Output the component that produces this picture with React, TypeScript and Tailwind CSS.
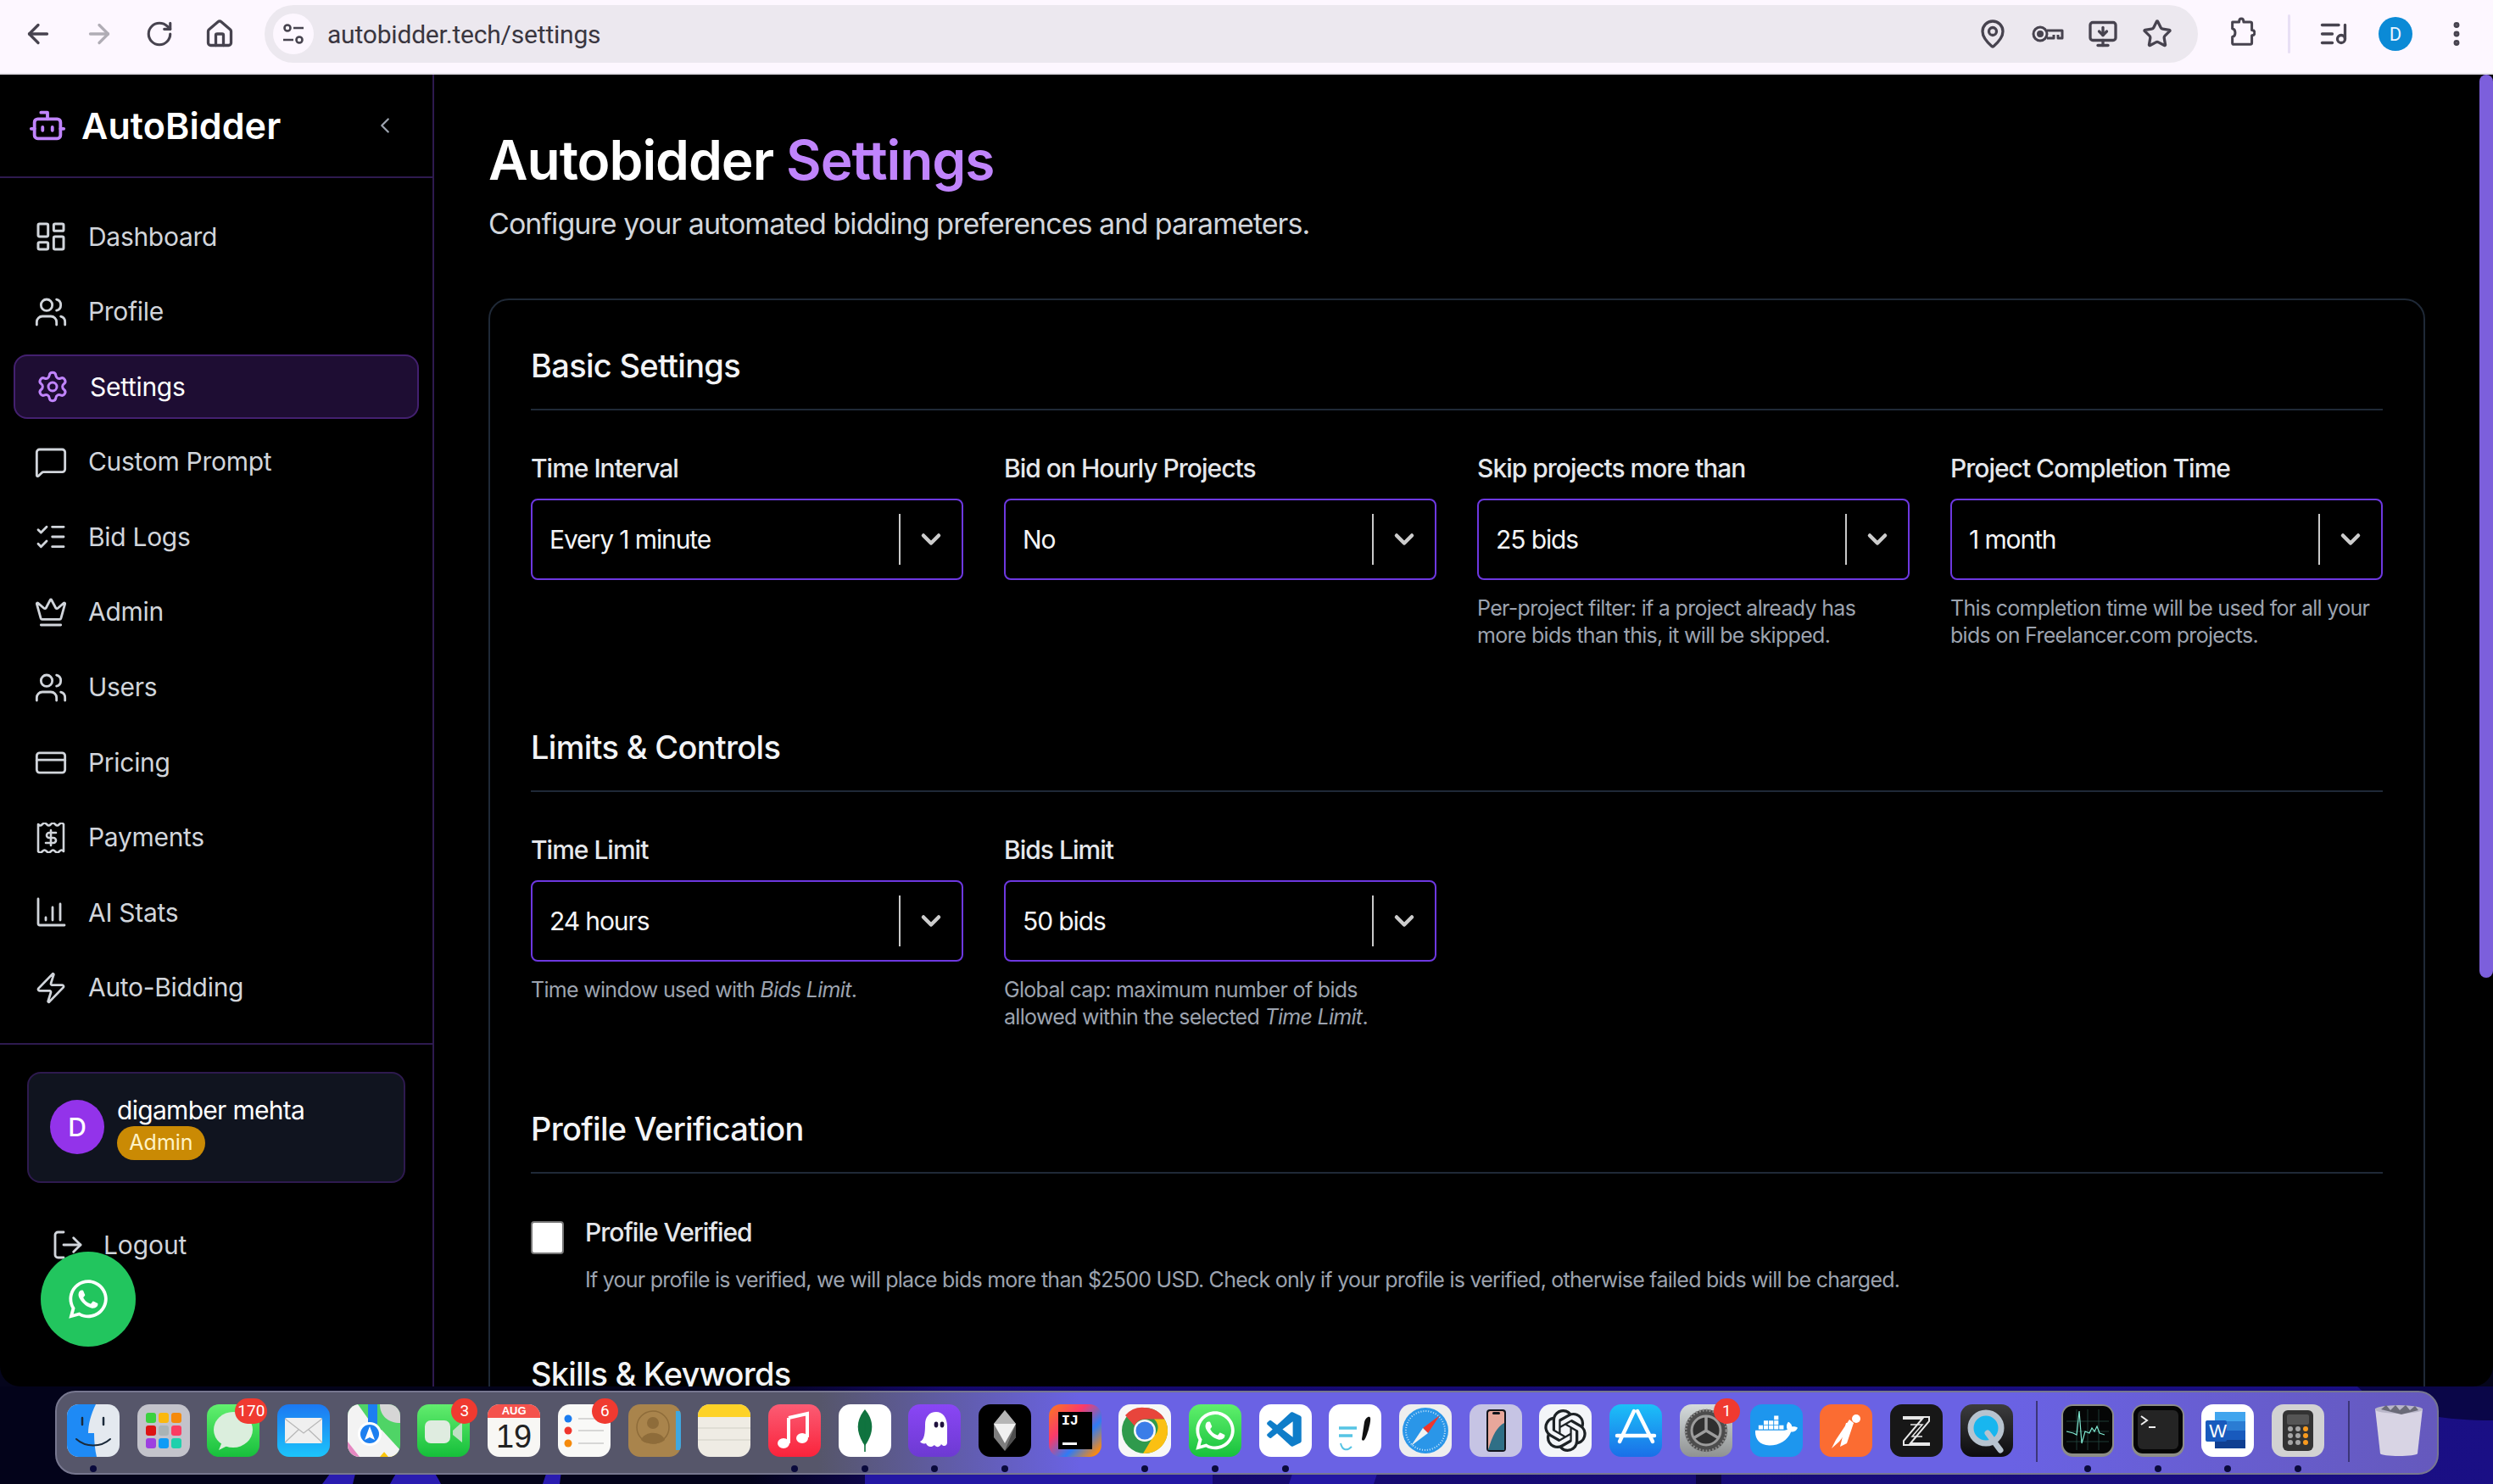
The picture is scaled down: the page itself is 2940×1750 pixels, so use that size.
import React from 'react';
import {
  ArrowLeft, ArrowRight, RotateCw, Home, MapPin, MonitorDown, Star, ListMusic,
  EllipsisVertical, Bot, ChevronLeft, ChevronDown, LayoutDashboard, Users, Settings, MessageSquare, ListChecks,
  Crown, CreditCard, Zap, LogOut,
} from 'lucide-react';
import { FaWhatsapp, FaDocker } from 'react-icons/fa';
import { VscVscode } from 'react-icons/vsc';
import { SiOpenai } from 'react-icons/si';

const PaymentsIcon = () => (
  <svg viewBox="0 0 34 36" className="w-[34px] h-[36px]" fill="none" stroke="currentColor" strokeWidth="2.6" strokeLinejoin="round">
    <path d="M2 2c2 2 3 2 5 0s3-2 5 0 3 2 5 0 3-2 5 0 3 2 5 0 3-2 5 0v32c-2-2-3-2-5 0s-3 2-5 0-3-2-5 0-3 2-5 0-3-2-5 0-3 2-5 0z" />
    <path d="M23 12h-8a3 3 0 0 0 0 6h5a3 3 0 0 1 0 6h-9M17 9v18" strokeLinecap="round" />
  </svg>
);

const StatsIcon = () => (
  <svg viewBox="0 0 36 36" className="w-[36px] h-[36px]" fill="none" stroke="currentColor" strokeWidth="2.8" strokeLinecap="round">
    <path d="M3 2v29a2 2 0 0 0 2 2h29M12 24v3M20 12v15M29 8v19" />
  </svg>
);

const SiteInfoIcon = () => (
  <svg viewBox="0 0 28 28" className="w-[28px] h-[28px]" fill="none" stroke="currentColor" strokeWidth="2.6">
    <circle cx="7" cy="7" r="3.5" />
    <circle cx="21" cy="21" r="3.5" />
    <path d="M14 7h12M2 21h12" />
  </svg>
);

const KeyIcon = () => (
  <svg viewBox="0 0 38 30" className="w-[38px] h-[30px]" fill="none" stroke="currentColor" strokeWidth="3">
    <circle cx="10" cy="15" r="8" />
    <circle cx="10" cy="15" r="2.5" fill="currentColor" />
    <path d="M18 11h18v9h-5v-4M26 16v4h-8" strokeLinejoin="round" />
  </svg>
);

const PuzzleIcon = () => (
  <svg viewBox="0 0 34 46" className="w-[30px] h-[42px]" fill="none" stroke="currentColor" strokeWidth="3.4" strokeLinejoin="round">
    <path d="M3 7h9c0-6 6-6 6 0h9a2 2 0 0 1 2 2v9c5 0 5 7 0 7v10a2 2 0 0 1-2 2H4a2 2 0 0 1-1-2v-8c5-1 5-10 0-11z" />
  </svg>
);

const nav = [
  { label: 'Dashboard', icon: <LayoutDashboard size={40} strokeWidth={1.8} /> },
  { label: 'Profile', icon: <Users size={40} strokeWidth={1.7} /> },
  { label: 'Settings', icon: <Settings size={40} strokeWidth={1.8} />, active: true },
  { label: 'Custom Prompt', icon: <MessageSquare size={42} strokeWidth={1.7} /> },
  { label: 'Bid Logs', icon: <ListChecks size={40} strokeWidth={1.7} /> },
  { label: 'Admin', icon: <Crown size={42} strokeWidth={1.7} /> },
  { label: 'Users', icon: <Users size={40} strokeWidth={1.7} /> },
  { label: 'Pricing', icon: <CreditCard size={43} strokeWidth={1.7} /> },
  { label: 'Payments', icon: <PaymentsIcon /> },
  { label: 'AI Stats', icon: <StatsIcon /> },
  { label: 'Auto-Bidding', icon: <Zap size={40} strokeWidth={1.7} /> },
];

const ChromeBar = () => (
  <div className="h-[88px] shrink-0 bg-[#fdf7ff] border-b-2 border-[#e6e2ea] pb-[6px] flex items-center text-[#47434f] relative z-10">
    <div className="w-[312px] flex items-center pl-[27px] gap-[36px]">
      <ArrowLeft size={36} strokeWidth={2.2} />
      <ArrowRight size={36} strokeWidth={2.2} className="text-[#b0adb5]" />
      <RotateCw size={34} strokeWidth={2.2} />
      <Home size={36} strokeWidth={2.2} />
    </div>
    <div className="w-[2280px] h-[68px] rounded-full bg-[#ece8ef] flex items-center pl-[10px] pr-[30px]">
      <div className="w-[48px] h-[48px] rounded-full bg-[#fdf7ff] flex items-center justify-center">
        <SiteInfoIcon />
      </div>
      <span className="ml-[16px] text-[30px] tracking-[-0.2px] text-[#3a3640] font-['Roboto',sans-serif]">autobidder.tech/settings</span>
      <div className="ml-auto flex items-center gap-[28px]">
        <MapPin size={36} strokeWidth={2.2} />
        <KeyIcon />
        <MonitorDown size={36} strokeWidth={2.2} />
        <Star size={36} strokeWidth={2.2} />
      </div>
    </div>
    <span className="ml-[38px] flex"><PuzzleIcon /></span>
    <div className="ml-[38px] w-[3px] h-[46px] rounded-full bg-[#e8dff5]" />
    <ListMusic size={36} strokeWidth={2.2} className="ml-[33px]" />
    <div className="ml-[35px] w-[40px] h-[40px] rounded-full bg-[#0b8ad6] text-[#e8f4ff] text-[22px] flex items-center justify-center font-['Roboto',sans-serif]">D</div>
    <EllipsisVertical size={36} strokeWidth={2.6} className="ml-[34px]" />
  </div>
);

const Sidebar = () => (
  <aside className="w-[512px] shrink-0 border-r-2 border-[#2e1a4f] flex flex-col relative">
    <div className="h-[122px] shrink-0 border-b-2 border-[#2e1a4f] flex items-center pl-[33px] pr-[41px]">
      <Bot size={46} strokeWidth={2} className="text-[#c084fc]" />
      <span className="ml-[17px] text-[43px] font-semibold text-white tracking-[0.1px]">AutoBidder</span>
      <ChevronLeft size={30} strokeWidth={1.8} className="ml-auto text-[#9ca3af]" />
    </div>
    <nav className="flex flex-col px-[16px] pt-[31px]">
      {nav.map((item) => (
        <div
          key={item.label}
          className={
            item.active
              ? 'h-[76px] mb-[12.6px] flex items-center rounded-[16px] border-2 border-[#43206f] bg-[#1e0d33] text-white'
              : 'h-[76px] mb-[12.6px] flex items-center rounded-[16px] border-2 border-transparent text-[#d1d5db]'
          }
        >
          <span className={item.active ? 'w-[40px] ml-[24px] flex justify-center text-[#c084fc]' : 'w-[40px] ml-[22px] flex justify-center'}>{item.icon}</span>
          <span className="ml-[24px] text-[30px] tracking-[-0.3px]">{item.label}</span>
        </div>
      ))}
    </nav>
    <div className="mt-[14px] border-t-2 border-[#2e1a4f] px-[32px] pt-[32px]">
      <div className="h-[131px] rounded-[16px] border-2 border-[#2e1a4f] bg-[#10141f] flex items-center pl-[25px]">
        <div className="w-[64px] h-[64px] rounded-full bg-[#9333ea] text-white text-[30px] font-medium flex items-center justify-center">D</div>
        <div className="ml-[15px] flex flex-col">
          <span className="text-[30px] leading-[36px] text-white tracking-[-0.7px]">digamber mehta</span>
          <span className="mt-[1px] w-[104px] h-[40px] rounded-full bg-[#ca8a04] text-[#fef3c7] text-[25px] flex items-center justify-center">Admin</span>
        </div>
      </div>
    </div>
    <div className="pl-[60px] pt-[51px] flex items-center text-[#d1d5db]">
      <LogOut size={40} strokeWidth={1.7} />
      <span className="ml-[22px] text-[30px] tracking-[-0.1px]">Logout</span>
    </div>
    <div className="absolute left-[48px] top-[1388px] w-[112px] h-[112px] rounded-full bg-[#22c55e] flex items-center justify-center text-white">
      <FaWhatsapp size={52} />
    </div>
  </aside>
);

const SectionTitle = ({ children }: { children: React.ReactNode }) => (
  <div className="h-[80px] border-b-2 border-[#1f2937] text-[38px] leading-[54px] font-medium text-[#f3f4f6] tracking-[-0.7px]">{children}</div>
);

const Field = ({ label, value, help }: { label: string; value: string; help?: React.ReactNode }) => (
  <div className="flex flex-col">
    <label className="h-[40px] leading-[38px] text-[30px] font-medium text-[#e5e7eb] tracking-[-1px]">{label}</label>
    <div className="mt-[15px] h-[96px] rounded-[8px] border-2 border-[#6d38e0] flex items-center pl-[20px]">
      <span className="flex-1 text-[30px] text-[#f3f4f6] tracking-[-1.1px]">{value}</span>
      <div className="w-[2px] h-[60px] bg-[#c9c9c9]" />
      <ChevronDown size={36} strokeWidth={3} className="mx-[18px] text-[#cccccc]" />
    </div>
    {help && <p className="mt-[17px] text-[25px] leading-[32px] text-[#9ca3af] tracking-[-0.7px]">{help}</p>}
  </div>
);

const MainPanel = () => (
  <main className="flex-1 pl-[64px] pr-[80px] pt-[65px] overflow-hidden">
    <h1 className="text-[64px] leading-[72px] font-semibold text-white tracking-[-1.05px]">
      Autobidder <span className="text-[#c084fc]">Settings</span>
    </h1>
    <p className="mt-[11px] text-[34px] leading-[56px] text-[#d1d5db] tracking-[-0.95px]">Configure your automated bidding preferences and parameters.</p>
    <div className="mt-[60px] rounded-t-[24px] border-2 border-[#1f2937] px-[48px] pt-[50px]">
      <SectionTitle>Basic Settings</SectionTitle>
      <div className="mt-[49px] grid grid-cols-4 gap-x-[48px] items-start h-[233px]">
        <Field label="Time Interval" value="Every 1 minute" />
        <Field label="Bid on Hourly Projects" value="No" />
        <Field label="Skip projects more than" value="25 bids" help={<>Per-project filter: if a project already has<br />more bids than this, it will be skipped.</>} />
        <Field label="Project Completion Time" value="1 month" help={<>This completion time will be used for all your<br />bids on Freelancer.com projects.</>} />
      </div>
      <div className="mt-[88px]">
        <SectionTitle>Limits &amp; Controls</SectionTitle>
      </div>
      <div className="mt-[49px] grid grid-cols-4 gap-x-[48px] items-start h-[233px]">
        <Field label="Time Limit" value="24 hours" help={<>Time window used with <em>Bids Limit</em>.</>} />
        <Field label="Bids Limit" value="50 bids" help={<>Global cap: maximum number of bids<br />allowed within the selected <em>Time Limit</em>.</>} />
      </div>
      <div className="mt-[88px]">
        <SectionTitle>Profile Verification</SectionTitle>
      </div>
      <div className="mt-[49px] flex">
        <div className="mt-[7px] w-[39px] h-[39px] rounded-[4px] border-2 border-[#767676] bg-white" />
        <div className="ml-[25px]">
          <div className="h-[40px] leading-[40px] text-[30px] font-medium text-[#e5e7eb] tracking-[-1px]">Profile Verified</div>
          <p className="mt-[16px] h-[40px] leading-[40px] text-[25px] text-[#9ca3af] tracking-[-0.75px]">If your profile is verified, we will place bids more than $2500 USD. Check only if your profile is verified, otherwise failed bids will be charged.</p>
        </div>
      </div>
      <div className="mt-[63px] text-[38px] leading-[56px] font-medium text-[#f3f4f6] tracking-[-0.8px]">Skills &amp; Keywords</div>
    </div>
  </main>
);

type DockProps = { name: string; dot?: boolean; badge?: string; children: React.ReactNode; className?: string };

const DockIcon = ({ name, dot, badge, children, className }: DockProps) => (
  <div title={name} className="relative w-[62px] h-[62px] shrink-0">
    <div className={`w-full h-full rounded-[14px] overflow-hidden flex items-center justify-center relative ${className ?? ''}`}>{children}</div>
    {badge && (
      <span className="absolute -top-[7px] -right-[9px] min-w-[31px] h-[30px] px-[3px] rounded-full bg-[#f03a30] text-white text-[19px] flex items-center justify-center font-['Roboto',sans-serif]">{badge}</span>
    )}
    {dot && <span className="absolute left-[27px] top-[72px] w-[8px] h-[8px] rounded-full bg-[#0a0a3c]" />}
  </div>
);

const Sep = () => <div className="w-[2px] h-[72px] mx-[7px] mt-[-4px] bg-[#3c3678] shrink-0" />;

const Art = ({ children }: { children: React.ReactNode }) => (
  <svg viewBox="0 0 62 62" className="absolute inset-0 w-full h-full">{children}</svg>
);

const Dock = () => (
  <div className="flex-1 relative pl-[65px] pt-[5px]">
    <div className="w-[2811px] h-[99px] rounded-[24px] border-2 border-[#77778f] bg-[linear-gradient(90deg,#56566a_0%,#56566a_32%,#6a62e4_43%,#6a62e4_82%,#6559bd_100%)] flex items-start pt-[14px] pl-[12px] gap-[20.7px]">
      <DockIcon name="Finder" dot className="bg-[#e4e9ef]">
        <Art>
          <path d="M0 0h34c-6 12-9 24-9 34h7c0 10 1 20 3 28H0z" fill="#1e8af5" />
          <path d="M18 16v8M43 16v8" stroke="#1b2a3a" strokeWidth="2.5" strokeLinecap="round" />
          <path d="M11 41c11 10 29 10 40 0" stroke="#1b2a3a" strokeWidth="2" fill="none" strokeLinecap="round" />
        </Art>
      </DockIcon>
      <DockIcon name="Launchpad" className="bg-[#c3c3cb]">
        <div className="grid grid-cols-3 gap-[3px]">
          {['bg-[#3bd13f]', 'bg-[#fbb80e]', 'bg-[#f58a0c]', 'bg-[#dd1313]', 'bg-[#a9b3b5]', 'bg-[#fa3d62]', 'bg-[#9d3fe0]', 'bg-[#0f9bf5]', 'bg-[#1ed0ac]'].map((c) => (
            <div key={c} className={`w-[12px] h-[12px] rounded-[3px] ${c}`} />
          ))}
        </div>
      </DockIcon>
      <DockIcon name="Messages" badge="170" className="bg-[linear-gradient(180deg,#62f06f,#17c03c)]">
        <Art>
          <ellipse cx="31" cy="30" rx="23" ry="21" fill="#dbeedd" />
          <path d="M18 44l-4 10 12-6z" fill="#dbeedd" />
        </Art>
      </DockIcon>
      <DockIcon name="Mail" className="bg-[linear-gradient(180deg,#1c78f2,#1cc4fb)]">
        <Art>
          <rect x="9" y="16" width="44" height="30" rx="2" fill="#efefef" />
          <path d="M9 17l22 17 22-17M9 45l16-15M53 45L37 30" stroke="#b8b8b8" strokeWidth="1.3" fill="none" />
        </Art>
      </DockIcon>
      <DockIcon name="Maps" className="bg-[#4fd466]">
        <Art>
          <path d="M0 0h12l44 62H0z" fill="#f3f3f3" />
          <path d="M0 44l14 18H0z" fill="#e587c1" />
          <path d="M38 62l12-14 12 14z" fill="#fcc60c" />
          <path d="M38 0c0 14 10 22 24 22V0z" fill="#d6d6d6" />
          <path d="M40 30l22 24v8H48L26 36z" fill="#f3f3f3" />
          <rect x="24" y="0" width="11" height="30" fill="#1c7ff0" />
          <circle cx="26" cy="35" r="14" fill="#fff" />
          <circle cx="26" cy="35" r="11" fill="#1c7ff0" />
          <path d="M26 26l6 16-6-3-6 3z" fill="#fff" />
        </Art>
      </DockIcon>
      <DockIcon name="FaceTime" badge="3" className="bg-[linear-gradient(180deg,#62ec6e,#15bf3a)]">
        <Art>
          <rect x="9" y="19" width="30" height="27" rx="7" fill="#dfece0" />
          <path d="M42 31l11-10v24L42 36z" fill="#bfe0c4" />
        </Art>
      </DockIcon>
      <DockIcon name="Calendar" className="bg-[#f8f7f4] flex-col justify-start">
        <div className="w-full h-[16px] shrink-0 bg-[#f4524c] text-white text-[13px] leading-[16px] font-semibold text-center font-['Liberation_Sans',sans-serif]">AUG</div>
        <div className="text-[38px] leading-[44px] text-[#222] font-['Liberation_Sans',sans-serif]">19</div>
      </DockIcon>
      <DockIcon name="Reminders" badge="6" className="bg-[#f9f9f7]">
        <Art>
          <circle cx="12" cy="17" r="4.5" fill="#1a7cf0" /><circle cx="12" cy="31" r="4.5" fill="#f0352c" /><circle cx="12" cy="46" r="4.5" fill="#f58a0c" />
          <path d="M24 17h30M24 31h30M24 46h30" stroke="#b5b5b5" strokeWidth="1.2" />
        </Art>
      </DockIcon>
      <DockIcon name="Contacts" className="bg-[#a9844c]">
        <Art>
          <rect x="56" y="8" width="6" height="46" fill="#3fa8e0" />
          <circle cx="29" cy="27" r="19" fill="none" stroke="#8e6c3a" strokeWidth="1.5" />
          <circle cx="29" cy="22" r="7" fill="#8e6c3a" />
          <path d="M15 42c4-11 24-11 28 0-6 6-22 6-28 0z" fill="#8e6c3a" />
        </Art>
      </DockIcon>
      <DockIcon name="Notes" className="bg-[#efece4]">
        <Art>
          <rect width="62" height="15" fill="#fdd227" />
          <path d="M0 28h62M0 42h62" stroke="#dcd9d0" strokeWidth="1.4" />
        </Art>
      </DockIcon>
      <DockIcon name="Music" dot className="bg-[linear-gradient(180deg,#fb5c74,#fa233b)]">
        <Art>
          <path d="M24 16l22-5v28" stroke="#fff" strokeWidth="4" fill="none" />
          <path d="M24 16v30" stroke="#fff" strokeWidth="4" />
          <ellipse cx="18" cy="46" rx="7" ry="6" fill="#fff" /><ellipse cx="40" cy="40" rx="7" ry="6" fill="#fff" />
        </Art>
      </DockIcon>
      <DockIcon name="MongoDB" dot className="bg-white">
        <Art>
          <path d="M31 6c10 12 12 26 0 43C19 32 21 18 31 6z" fill="#10733f" />
          <path d="M31 20v36" stroke="#10733f" strokeWidth="1.6" />
        </Art>
      </DockIcon>
      <DockIcon name="Ghost" dot className="bg-[linear-gradient(180deg,#8a46f5,#6d3ad2)]">
        <Art>
          <path d="M14 44c5-2 6-10 6-20 0-9 5-15 13-15s13 7 13 17v19c0 5-5 5-7 2-2 4-6 4-8 1-3 3-8 3-10-2-2 1-6 0-7-2z" fill="#fff" />
          <ellipse cx="33" cy="24" rx="2.4" ry="3.4" fill="#20123f" /><ellipse cx="40" cy="24" rx="2.4" ry="3.4" fill="#20123f" />
        </Art>
      </DockIcon>
      <DockIcon name="Prism" dot className="bg-black">
        <Art>
          <path d="M31 7l13 16v16L31 55 18 39V23z" fill="#7e7e7e" />
          <path d="M31 7l13 16-13 6-13-6z" fill="#b5b5b5" />
          <path d="M18 23l26 0-13 23z" fill="#f0f0f0" />
          <path d="M44 23v16L31 55z" fill="#4e4e4e" />
        </Art>
      </DockIcon>
      <DockIcon name="IntelliJ IDEA" className="bg-[linear-gradient(135deg,#fa7a1e_0%,#fa3a6a_35%,#2f7bf5_65%,#fa8a10_92%)]">
        <div className="w-[40px] h-[44px] bg-black relative">
          <span className="absolute left-[4px] top-[1px] text-[17px] font-bold leading-[20px] text-white font-['Liberation_Mono',monospace]">IJ</span>
          <span className="absolute left-[5px] bottom-[5px] w-[17px] h-[3px] bg-white" />
        </div>
      </DockIcon>
      <DockIcon name="Chrome" dot className="bg-[#f7f7f7]">
        <Art>
          <circle cx="31" cy="31" r="27" fill="#2f9a4c" />
          <path d="M31 4a27 27 0 0 1 23.400 13.500H31a13 13 0 0 0-12 8L8 13A27 27 0 0 1 31 4z" fill="#e8453c" />
          <path d="M54.400 17.500A27 27 0 0 1 29 58l12-20a13 13 0 0 0 1-20.500z" fill="#fbc012" />
          <circle cx="31" cy="31" r="13" fill="#f7f7f7" /><circle cx="31" cy="31" r="10.500" fill="#3b7de8" />
        </Art>
      </DockIcon>
      <DockIcon name="WhatsApp" dot className="bg-[linear-gradient(180deg,#5ff06c,#18c13d)] text-white">
        <FaWhatsapp size={52} />
      </DockIcon>
      <DockIcon name="VS Code" dot className="bg-white text-[#0f7dc9]">
        <VscVscode size={50} />
      </DockIcon>
      <DockIcon name="Freeform" className="bg-white">
        <Art>
          <path d="M12 28h21M12 37h16" stroke="#56c4e4" strokeWidth="3.4" />
          <path d="M14 46c2 9 8 9 13 4" stroke="#56c4e4" strokeWidth="2" fill="none" />
          <path d="M42 21c1-5 6-8 7-5 1 5-4 22-7 26-1 1-3 1-3-1z" fill="#111" />
        </Art>
      </DockIcon>
      <DockIcon name="Safari" className="bg-[#eeeeee]">
        <Art>
          <circle cx="31" cy="31" r="27" fill="#2a96e8" />
          <circle cx="31" cy="31" r="23" fill="none" stroke="#c8e4fa" strokeWidth="2" strokeDasharray="1 2" />
          <path d="M48 13L28 28l6 6z" fill="#f0352c" /><path d="M14 49l20-15-6-6z" fill="#f2f2f2" />
        </Art>
      </DockIcon>
      <DockIcon name="iPhone Mirroring" className="bg-[#c6c4e4]">
        <Art>
          <rect x="20" y="6" width="23" height="50" rx="4" fill="#12141c" />
          <rect x="22" y="8" width="19" height="46" rx="2.500" fill="#e8a79b" />
          <path d="M41 22c-8 4-14 14-19 32h19z" fill="#2f6f86" />
          <rect x="27" y="9" width="9" height="3" rx="1.500" fill="#12141c" />
        </Art>
      </DockIcon>
      <DockIcon name="ChatGPT" className="bg-[#f3f5f8] text-[#1d2225]">
        <SiOpenai size={50} />
      </DockIcon>
      <DockIcon name="App Store" className="bg-[linear-gradient(180deg,#1cc0f8,#1a6fe8)]">
        <Art>
          <path d="M33 8l18 36M29 8L12 44M9 37h44" stroke="#fff" strokeWidth="4.500" strokeLinecap="round" />
        </Art>
      </DockIcon>
      <DockIcon name="System Settings" badge="1" className="bg-[linear-gradient(180deg,#d5dbdc,#8f9292)]">
        <Art>
          <circle cx="31" cy="31" r="25" fill="#4c4c4c" />
          <circle cx="31" cy="31" r="24" fill="none" stroke="#8a8a8a" strokeWidth="3" strokeDasharray="2 2" />
          <circle cx="31" cy="31" r="17" fill="#2f2f2f" stroke="#9c9c9c" strokeWidth="3" />
          <path d="M31 31V14M31 31l15 9M31 31l-15 9" stroke="#9c9c9c" strokeWidth="3.500" />
        </Art>
      </DockIcon>
      <DockIcon name="Docker" className="bg-[#1d96ee] text-white">
        <FaDocker size={50} />
      </DockIcon>
      <DockIcon name="Postman" className="bg-[#fb6c32]">
        <Art>
          <circle cx="43" cy="17" r="5" fill="#fff" />
          <path d="M40 22L23 44l-9 8 5-10 16-24z" fill="#fff" />
          <path d="M40 22l-8 24-8 4 7-28z" fill="#fff" />
        </Art>
      </DockIcon>
      <DockIcon name="Zed" className="bg-[#171717]">
        <Art>
          <path d="M16 15h30v5L24 46h22v2H16v-5l22-26H16z" fill="none" stroke="#e8e8e8" strokeWidth="2" />
          <path d="M24 24h14L26 38h12" fill="none" stroke="#e8e8e8" strokeWidth="1.5" />
        </Art>
      </DockIcon>
      <DockIcon name="QuickTime" className="bg-[linear-gradient(180deg,#3c3c3e,#0c0c0e)]">
        <Art>
          <circle cx="30" cy="28" r="18" fill="#18b6ef" stroke="#b7c3cf" strokeWidth="7" />
          <path d="M32 34l15 20" stroke="#b7c3cf" strokeWidth="7" strokeLinecap="round" />
        </Art>
      </DockIcon>
      <Sep />
      <DockIcon name="Activity Monitor" dot className="bg-[#8d8d86]">
        <Art>
          <rect x="2" y="2" width="58" height="56" rx="11" fill="#050606" />
          <path d="M6 20h50M6 32h50M6 44h50M18 6v48M31 6v48M44 6v48" stroke="#254a42" strokeWidth="0.8" />
          <path d="M6 32l8 2 4 2 3-28 3 38 4-14 5 2 3-6 3 4 3-6 3 8 6 2" stroke="#7fe8d0" strokeWidth="1.2" fill="none" />
        </Art>
      </DockIcon>
      <DockIcon name="Terminal" dot className="bg-[#8d8d86]">
        <Art>
          <rect x="2" y="2" width="58" height="56" rx="11" fill="#050505" />
          <rect x="7" y="7" width="48" height="46" rx="6" fill="#242424" />
          <path d="M11 14l7 5-7 5M20 27h8" stroke="#eee" strokeWidth="2" fill="none" />
        </Art>
      </DockIcon>
      <DockIcon name="Word" dot className="bg-white">
        <Art>
          <rect x="16" y="9" width="36" height="11" fill="#41a5ee" /><rect x="16" y="20" width="36" height="11" fill="#2b7cd3" />
          <rect x="16" y="31" width="36" height="11" fill="#185abd" /><rect x="16" y="42" width="36" height="10" fill="#103f91" />
          <rect x="5" y="19" width="25" height="25" rx="2" fill="#185abd" />
        </Art>
        <span className="absolute left-[9px] top-[19px] text-[22px] leading-[26px] text-white font-['Liberation_Sans',sans-serif]">W</span>
      </DockIcon>
      <DockIcon name="Calculator" dot className="bg-[#d2d2d2]">
        <Art>
          <rect x="13" y="7" width="36" height="48" rx="6" fill="#333" />
          <rect x="18" y="12" width="26" height="12" rx="2" fill="#555" />
          {[29, 37, 45].flatMap((y) => [22, 31, 40].map((x) => <circle key={`${x}-${y}`} cx={x} cy={y} r="3" fill={x === 40 ? '#f79a1e' : '#a5a5a5'} />))}
        </Art>
      </DockIcon>
      <Sep />
      <div className="relative w-[62px] h-[62px] shrink-0">
        <svg viewBox="0 0 62 62" className="w-full h-full">
          <path d="M3 5h56l-6 53c-1 4-43 4-44 0z" fill="#d8d4e4" />
          <ellipse cx="31" cy="6" rx="28" ry="5" fill="#b9b6c9" />
          <path d="M10 6l6-5 5 6 6-6 5 6 7-6 5 6 6-5 4 5-20 5z" fill="#6a6a78" />
        </svg>
      </div>
    </div>
  </div>
);

export default function App() {
  return (
    <div className="w-[2940px] h-[1750px] relative overflow-hidden flex flex-col bg-[#05051c] font-['Inter',sans-serif]">
      {/* wallpaper peeking out around the dock */}
      <svg viewBox="0 0 2940 115" className="absolute left-0 bottom-0 w-[2940px] h-[115px]">
        <defs>
          <linearGradient id="wall" x1="0" x2="1" y1="0" y2="0">
            <stop offset="0" stopColor="#03031a" />
            <stop offset="0.3" stopColor="#03031a" />
            <stop offset="0.38" stopColor="#14086a" />
            <stop offset="1" stopColor="#1a0f85" />
          </linearGradient>
        </defs>
        <rect width="2940" height="115" fill="url(#wall)" />
        <path d="M380 115l30-40h16l-10 40zM460 115c20-40 40-40 60 0zM640 115l10-30h14l-4 30z" fill="#2a1cb0" />
        <path d="M1020 115V100h410v15zM1520 115l10-30h100l-10 30z" fill="#2418a4" />
        <path d="M2000 115V100h30v15z" fill="#0d0540" />
        <path d="M2780 0h160v40c-60 0-130-10-160-40z" fill="#0a0648" />
      </svg>
      <ChromeBar />
      <div className="h-[1547px] shrink-0 flex bg-black rounded-b-[24px] overflow-hidden relative">
        <Sidebar />
        <MainPanel />
        <div className="absolute right-0 top-0 w-[16px] h-[1065px] rounded-full bg-[#7c5fdc]" />
      </div>
      <Dock />
    </div>
  );
}
